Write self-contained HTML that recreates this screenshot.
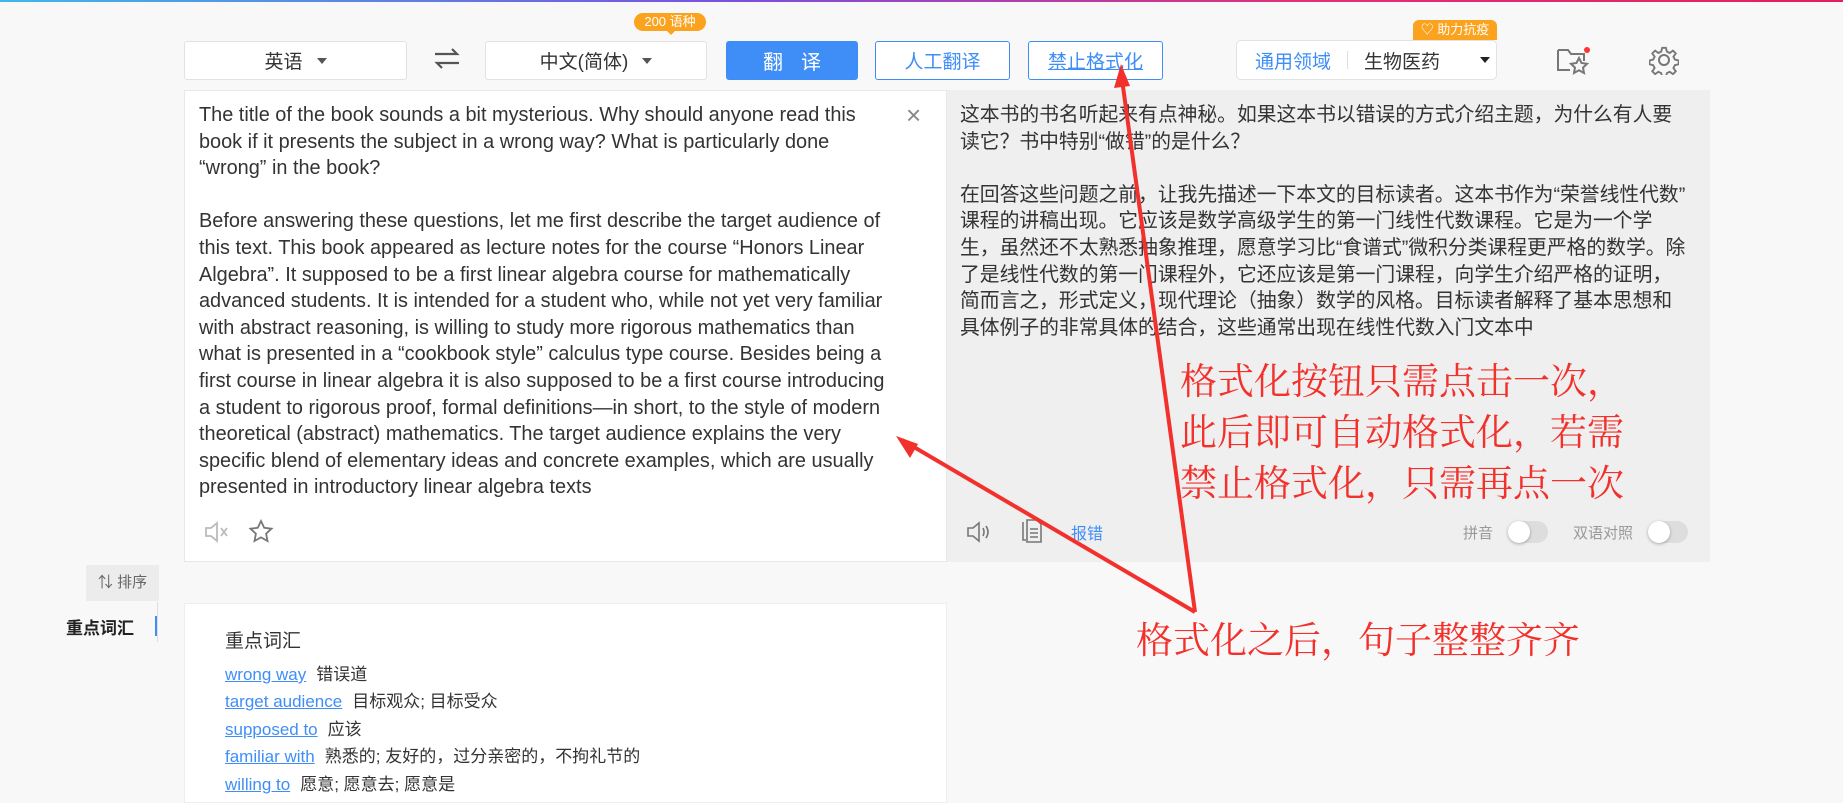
<!DOCTYPE html>
<html><head><meta charset="utf-8"><style>
*{margin:0;padding:0;box-sizing:border-box}
body{width:1843px;height:800px;background:#f8f8f8;font-family:"Liberation Sans","Noto Sans CJK SC",sans-serif;position:relative;overflow:hidden;color:#333}
.a{position:absolute}
.topline{left:0;top:0;width:1843px;height:2px;background:linear-gradient(90deg,#3fb8e8,#7b4fe0 40%,#e0307a 70%,#e02060)}
.box{background:#fff;border:1px solid #e2e2e2;border-radius:3px;display:flex;align-items:center;justify-content:center;font-size:19px;color:#333}
.caret{display:inline-block;width:0;height:0;border-left:5px solid transparent;border-right:5px solid transparent;border-top:6px solid #555;margin-left:14px}
.btn{border:1px solid #3f8ef8;border-radius:3px;color:#3f8ef8;display:flex;align-items:center;justify-content:center;font-size:19px;background:#fff}
.src{font-size:19.9px;line-height:26.6px;color:#333;white-space:nowrap}
.tgt{font-size:19.8px;line-height:26.6px;color:#333;white-space:nowrap}
.red{color:#f2312c;font-family:"Liberation Serif","Noto Serif CJK SC",serif;font-size:37px;line-height:51px;white-space:nowrap}
.voc{font-size:17px;line-height:27.4px;color:#333}
.voc a{color:#3f8ef8;text-decoration:underline;margin-right:10px}
.sw{width:40px;height:22px;border-radius:11px;background:#ddd}
.sw:before{content:"";position:absolute;left:0;top:0;width:22px;height:22px;border-radius:50%;background:#fff;box-shadow:0 1px 3px rgba(0,0,0,.3)}
</style></head><body>
<div class="a topline"></div>

<div class="a box" style="left:184px;top:41px;width:223px;height:39px">英语<span class="caret"></span></div>
<svg class="a" style="left:432px;top:46px" width="30" height="26" viewBox="0 0 30 26"><path d="M3 8h22l-5-5M27 17H5l5 5" stroke="#555" stroke-width="2.2" fill="none"/></svg>
<div class="a box" style="left:485px;top:41px;width:222px;height:39px">中文(简体)<span class="caret"></span></div>
<div class="a" style="left:634px;top:13px;width:72px;height:18px;background:#fba21e;border-radius:9px;color:#fff;font-size:13px;text-align:center;line-height:18px">200 语种</div>
<div class="a" style="left:666px;top:30px;border-left:5px solid transparent;border-right:5px solid transparent;border-top:5px solid #fba21e"></div>
<div class="a" style="left:726px;top:41px;width:132px;height:39px;background:#3f8ef8;border-radius:3px;color:#fff;font-size:20px;display:flex;align-items:center;justify-content:center;letter-spacing:18px;padding-left:18px">翻译</div>
<div class="a btn" style="left:875px;top:41px;width:135px;height:39px">人工翻译</div>
<div class="a btn" style="left:1028px;top:41px;width:135px;height:39px;text-decoration:underline">禁止格式化</div>

<div class="a box" style="left:1236px;top:40px;width:261px;height:40px;justify-content:flex-start;padding-left:18px;border-radius:5px"><span style="color:#3f8ef8">通用领域</span><span style="width:1px;height:18px;background:#ddd;margin:0 16px"></span>生物医药<span class="caret" style="margin-left:40px;border-top-color:#222"></span></div>
<div class="a" style="left:1413px;top:20px;width:84px;height:20px;background:#fba21e;border-radius:6px 6px 0 0;color:#fff;font-size:13px;line-height:20px;text-align:center">♡ 助力抗疫</div>
<svg class="a" style="left:1556px;top:45px" width="36" height="30" viewBox="0 0 36 30"><path d="M2 5h10l3 4h13v7M14 25H2V5" stroke="#777" stroke-width="2" fill="none"/><path d="M23 13l2.5 5 5.5.8-4 3.8 1 5.4-5-2.7-5 2.7 1-5.4-4-3.8 5.5-.8z" stroke="#777" stroke-width="2" fill="none"/><circle cx="31" cy="5" r="3" fill="#f33"/></svg>
<svg class="a" style="left:1649px;top:45px" width="30" height="30" viewBox="0 0 30 30"><path d="M13 2h4l1 4 3 1.5 3.5-2.5 3 3-2.5 3.5 1.5 3 4 1v4l-4 1-1.5 3 2.5 3.5-3 3-3.5-2.5-3 1.5-1 4h-4l-1-4-3-1.5-3.5 2.5-3-3 2.5-3.5-1.5-3-4-1v-4l4-1 1.5-3-2.5-3.5 3-3 3.5 2.5 3-1.5z" stroke="#777" stroke-width="2" fill="none" transform="scale(.94) translate(1,1)"/><circle cx="15" cy="15" r="5" stroke="#777" stroke-width="2" fill="none"/></svg>

<div class="a" style="left:184px;top:90px;width:763px;height:472px;background:#fff;border:1px solid #e8e8e8"></div>
<div class="a" style="left:947px;top:90px;width:763px;height:472px;background:#efefef"></div>

<div class="a src" style="left:199px;top:102px">The title of the book sounds a bit mysterious. Why should anyone read this<br>book if it presents the subject in a wrong way? What is particularly done<br>“wrong” in the book?<br><br>Before answering these questions, let me first describe the target audience of<br>this text. This book appeared as lecture notes for the course “Honors Linear<br>Algebra”. It supposed to be a first linear algebra course for mathematically<br>advanced students. It is intended for a student who, while not yet very familiar<br>with abstract reasoning, is willing to study more rigorous mathematics than<br>what is presented in a “cookbook style” calculus type course. Besides being a<br>first course in linear algebra it is also supposed to be a first course introducing<br>a student to rigorous proof, formal definitions—in short, to the style of modern<br>theoretical (abstract) mathematics. The target audience explains the very<br>specific blend of elementary ideas and concrete examples, which are usually<br>presented in introductory linear algebra texts</div>
<div class="a" style="left:906px;top:102px;font-size:26px;color:#888;line-height:26px">×</div>
<svg class="a" style="left:204px;top:520px" width="26" height="24" viewBox="0 0 26 24"><path d="M2 8h5l6-5v18l-6-5H2z" stroke="#bbb" stroke-width="1.8" fill="none"/><path d="M17 8l6 8M23 8l-6 8" stroke="#bbb" stroke-width="1.8"/></svg>
<svg class="a" style="left:248px;top:519px" width="26" height="26" viewBox="0 0 26 26"><path d="M13 2l3.2 6.8 7.3.9-5.4 5 1.4 7.3L13 18.4 6.5 22l1.4-7.3-5.4-5 7.3-.9z" stroke="#777" stroke-width="1.8" fill="none"/></svg>

<div class="a tgt" style="left:960px;top:102px">这本书的书名听起来有点神秘。如果这本书以错误的方式介绍主题，为什么有人要<br>读它？书中特别“做错”的是什么？<br><br>在回答这些问题之前，让我先描述一下本文的目标读者。这本书作为“荣誉线性代数”<br>课程的讲稿出现。它应该是数学高级学生的第一门线性代数课程。它是为一个学<br>生，虽然还不太熟悉抽象推理，愿意学习比“食谱式”微积分类课程更严格的数学。除<br>了是线性代数的第一门课程外，它还应该是第一门课程，向学生介绍严格的证明，<br>简而言之，形式定义，现代理论（抽象）数学的风格。目标读者解释了基本思想和<br>具体例子的非常具体的结合，这些通常出现在线性代数入门文本中</div>
<svg class="a" style="left:966px;top:520px" width="26" height="24" viewBox="0 0 26 24"><path d="M2 8h5l6-5v18l-6-5H2z" stroke="#777" stroke-width="1.6" fill="none"/><path d="M17 8q2 4 0 8M20 6q4 6 0 12" stroke="#777" stroke-width="1.6" fill="none"/></svg>
<svg class="a" style="left:1020px;top:518px" width="24" height="26" viewBox="0 0 24 26"><path d="M3 4v18h3M7 2h10l4 4v18H7z" stroke="#777" stroke-width="1.6" fill="none"/><path d="M10 11h8M10 15h8M10 19h8" stroke="#777" stroke-width="1.5"/></svg>
<div class="a" style="left:1071px;top:520px;font-size:16px;color:#3f8ef8">报错</div>
<div class="a" style="left:1463px;top:522px;font-size:15px;color:#999">拼音</div>
<div class="a sw" style="left:1508px;top:521px"></div>
<div class="a" style="left:1573px;top:522px;font-size:15px;color:#999">双语对照</div>
<div class="a sw" style="left:1648px;top:521px"></div>

<div class="a" style="left:86px;top:565px;width:73px;height:36px;background:#ececec;font-size:15px;color:#666;line-height:36px;text-align:center">⇅ 排序</div>
<div class="a" style="left:66px;top:614px;font-size:17px;font-weight:bold;color:#222">重点词汇</div>
<div class="a" style="left:155px;top:616px;width:3px;height:20px;background:#3f8ef8"></div>
<div class="a" style="left:157px;top:602px;width:1px;height:40px;background:#ddd"></div>

<div class="a" style="left:184px;top:603px;width:763px;height:200px;background:#fff;border:1px solid #eee"></div>
<div class="a" style="left:225px;top:626px;font-size:19px;color:#333">重点词汇</div>
<div class="a voc" style="left:225px;top:661px">
<div><a>wrong way</a>错误道</div>
<div><a>target audience</a>目标观众; 目标受众</div>
<div><a>supposed to</a>应该</div>
<div><a>familiar with</a>熟悉的; 友好的，过分亲密的，不拘礼节的</div>
<div><a>willing to</a>愿意; 愿意去; 愿意是</div>
</div>

<div class="a red" style="left:1180px;top:357px">格式化按钮只需点击一次，<br>此后即可自动格式化，若需<br>禁止格式化，只需再点一次</div>
<div class="a red" style="left:1136px;top:616px">格式化之后，句子整整齐齐</div>

<svg class="a" style="left:0;top:0" width="1843" height="800">
<path d="M1195 612L1121 72" stroke="#f2312c" stroke-width="4"/>
<path d="M1121 64l-7 24 16-2z" fill="#f2312c"/>
<path d="M1195 612L902 440" stroke="#f2312c" stroke-width="4"/>
<path d="M896 436l14 22 8-14z" fill="#f2312c"/>
</svg>
</body></html>
